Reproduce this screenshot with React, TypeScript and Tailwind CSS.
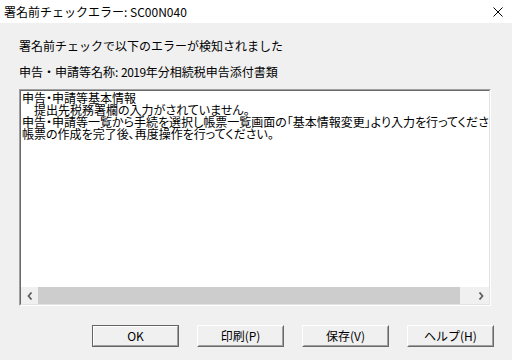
import React from "react";

const jp = "font-['Meiryo_UI','Yu_Gothic_UI','Noto_Sans_CJK_JP',sans-serif]";

function ClassicButton({ label, isDefault }: { label: string; isDefault?: boolean }) {
  if (isDefault) {
    return (
      <div className="w-[87px] h-[22px] border border-[#646464] bg-[#f0f0f0]">
        <div className="w-full h-full border-t border-l border-t-white border-l-white border-b border-r border-b-[#a0a0a0] border-r-[#a0a0a0] flex items-center justify-center text-[12px] leading-none text-black">
          {label}
        </div>
      </div>
    );
  }
  return (
    <div className="w-[87px] h-[22px] border-t border-l border-t-white border-l-white border-b border-r border-b-[#696969] border-r-[#696969] bg-[#f0f0f0]">
      <div className="w-full h-full border-t border-l border-t-[#f0f0f0] border-l-[#f0f0f0] border-b border-r border-b-[#a0a0a0] border-r-[#a0a0a0] flex items-center justify-center text-[12px] leading-none text-black">
        {label}
      </div>
    </div>
  );
}

export default function App() {
  return (
    <div
      className="w-[512px] h-[360px] bg-[#f0f0f0] flex flex-col overflow-hidden text-black font-['Noto_Sans_CJK_JP',sans-serif]"
    >
      {/* title bar */}
      <div className="h-[23px] bg-white flex items-center justify-between pl-[4px] pr-[9px] shrink-0">
        <span className="text-[12px] leading-none text-black">署名前チェックエラー: SC00N040</span>
        <svg width="10" height="10" viewBox="0 0 10 10" className="mt-[1px]">
          <path d="M0.5 0.5 L9.5 9.5 M9.5 0.5 L0.5 9.5" stroke="#000" strokeWidth="1" />
        </svg>
      </div>

      <div className="flex flex-col px-[19px]">
        <div className="mt-[15px] h-[16px] text-[12px] leading-[16px]">署名前チェックで以下のエラーが検知されました</div>
        <div className="mt-[10px] h-[16px] text-[12px] leading-[16px]">
          申告・申請等名称: <span className="tracking-[-0.5px]">2019</span>年分相続税申告添付書類
        </div>

        {/* text box */}
        <div className="mt-[9px] w-[472px] h-[217px] border-t border-l border-t-[#a0a0a0] border-l-[#a0a0a0] border-b border-r border-b-white border-r-white">
          <div className="w-full h-full border-t border-l border-t-[#696969] border-l-[#696969] border-b border-r border-b-[#e3e3e3] border-r-[#e3e3e3] bg-white flex flex-col">
            <div className="flex-1 overflow-hidden pl-[1px] pt-[1px] text-[12px] leading-[12px] whitespace-nowrap [font-feature-settings:'palt']">
              <div>申告・申請等基本情報</div>
              <div>　提出先税務署欄の入力がされていません。</div>
              <div>申告・申請等一覧から手続を選択し帳票一覧画面の「基本情報変更」より入力を行ってください。</div>
              <div>帳票の作成を完了後、再度操作を行ってください。</div>
            </div>
            {/* horizontal scrollbar */}
            <div className="h-[17px] bg-[#f0f0f0] flex shrink-0">
              <div className="w-[17px] h-full flex items-center justify-center">
                <svg width="6" height="8" viewBox="0 0 6 8">
                  <path d="M4.5 0.5 L1.5 4 L4.5 7.5" stroke="#606060" strokeWidth="1.8" fill="none" />
                </svg>
              </div>
              <div className="w-[422px] h-full bg-[#cdcdcd]" />
              <div className="flex-1" />
              <div className="w-[17px] h-full flex items-center justify-center">
                <svg width="6" height="8" viewBox="0 0 6 8">
                  <path d="M1.5 0.5 L4.5 4 L1.5 7.5" stroke="#606060" strokeWidth="1.8" fill="none" />
                </svg>
              </div>
            </div>
          </div>
        </div>
      </div>

      {/* buttons */}
      <div className="mt-[19px] pl-[92px] flex gap-[18px]">
        <ClassicButton label="OK" isDefault />
        <ClassicButton label="印刷(P)" />
        <ClassicButton label="保存(V)" />
        <ClassicButton label="ヘルプ(H)" />
      </div>
    </div>
  );
}
